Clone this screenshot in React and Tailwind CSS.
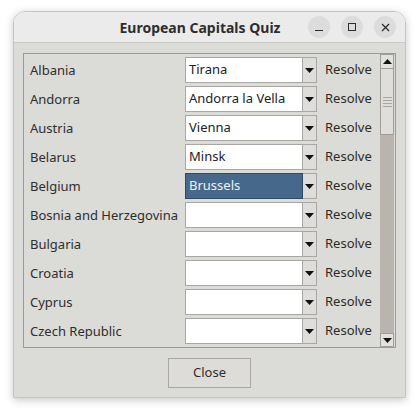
import React from "react";

const rows = [
  ["Albania", "Tirana"],
  ["Andorra", "Andorra la Vella"],
  ["Austria", "Vienna"],
  ["Belarus", "Minsk"],
  ["Belgium", "Brussels", true],
  ["Bosnia and Herzegovina", ""],
  ["Bulgaria", ""],
  ["Croatia", ""],
  ["Cyprus", ""],
  ["Czech Republic", ""],
];

function Tri({ up }) {
  return (
    <svg width="9" height="5" viewBox="0 0 9 5">
      {up ? <path d="M0 5 L4.5 0 L9 5 Z" fill="#111" /> : <path d="M0 0 L9 0 L4.5 5 Z" fill="#111" />}
    </svg>
  );
}

function Row({ label, value, selected }) {
  return (
    <div className="h-[26px] flex items-center">
      <div className="w-[155px] text-[13px] text-[#2e2e2e] leading-none">{label}</div>
      <div className="flex h-[26px] w-[132px]">
        <div
          className={
            selected
              ? "flex-1 border border-[#2d4a66] bg-[#46698b] text-[#eef2f6] text-[13px] flex items-center pl-[3px]"
              : "flex-1 border border-[#a9a7a3] bg-white text-[#222] text-[13px] flex items-center pl-[3px]"
          }
        >
          {value}
        </div>
        <div className="w-[14px] border border-l-0 border-[#a9a7a3] bg-[#dedddb] flex items-center justify-center">
          <Tri />
        </div>
      </div>
      <div className="ml-[8px] text-[13px] text-[#2f2a24]">Resolve</div>
    </div>
  );
}

export default function App() {
  return (
    <div
      className="w-[419px] h-[414px] bg-white pl-[13px] pt-[11px]"
      style={{ fontFamily: '"Noto Sans", "Open Sans", sans-serif' }}
    >
      <div className="w-[393px] h-[387px] rounded-t-[12px] overflow-hidden flex flex-col border border-[#c4c4c4] shadow-[0_2px_8px_rgba(0,0,0,0.22)]">
        <div className="h-[31px] bg-[#ebebeb] border-b border-[#c9c9c7] flex items-center shrink-0">
          <div className="flex-1 pl-[78px] text-center text-[14px] font-bold text-[#2e2e2e]">
            European Capitals Quiz
          </div>
          <div className="flex gap-[11px] mr-[9px]">
            <div className="w-[22px] h-[22px] rounded-full bg-[#dcdcdc] flex items-center justify-center">
              <div className="w-[8px] h-[1px] bg-[#2e2e2e] mt-[6px]" />
            </div>
            <div className="w-[22px] h-[22px] rounded-full bg-[#dcdcdc] flex items-center justify-center">
              <div className="w-[8px] h-[8px] border border-[#2e2e2e]" />
            </div>
            <div className="w-[22px] h-[22px] rounded-full bg-[#dcdcdc] flex items-center justify-center">
              <svg width="9" height="9" viewBox="0 0 9 9">
                <path d="M1 1 L8 8 M8 1 L1 8" stroke="#2e2e2e" strokeWidth="1.3" />
              </svg>
            </div>
          </div>
        </div>
        <div className="flex-1 bg-[#dbdbd8] px-[9px] pt-[10px] pb-[10px] flex flex-col">
          <div className="h-[295px] border border-[#9e9b96] flex">
            <div className="flex-1 pl-[6px] pt-[3px] flex flex-col gap-[3px] overflow-hidden">
              {rows.map(([l, v, s]) => (
                <Row key={l} label={l} value={v} selected={s} />
              ))}
            </div>
            <div className="w-[14px] mr-[1px] flex flex-col bg-[#b9b5ae]">
              <div className="h-[15px] bg-[#e2e1df] border border-[#a09d98] flex items-center justify-center">
                <Tri up />
              </div>
              <div className="h-[66px] bg-[#dfdedb] border border-t-0 border-[#a09d98] flex flex-col items-center justify-center gap-[2px]">
                <div className="w-[9px] h-[1px] bg-[#a8a6a2]" />
                <div className="w-[9px] h-[1px] bg-[#a8a6a2]" />
                <div className="w-[9px] h-[1px] bg-[#a8a6a2]" />
                <div className="w-[9px] h-[1px] bg-[#a8a6a2]" />
              </div>
              <div className="flex-1" />
              <div className="h-[14px] bg-[#e2e1df] border border-[#a09d98] flex items-center justify-center">
                <Tri />
              </div>
            </div>
          </div>
          <div className="mt-[10px] self-center w-[83px] h-[30px] border border-[#aaa8a4] bg-[#dddcd9] flex items-center justify-center text-[13px] text-[#2e2e2e]">
            Close
          </div>
        </div>
      </div>
    </div>
  );
}
